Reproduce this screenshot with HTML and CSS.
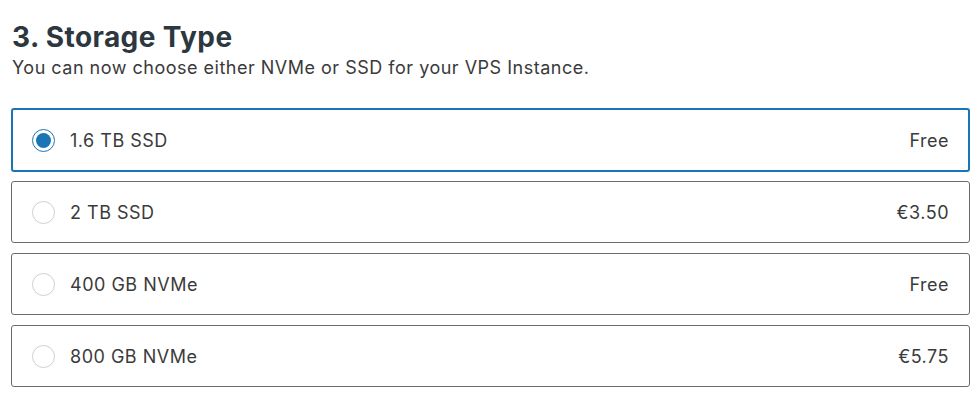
FILE: index.html
```html
<!DOCTYPE html>
<html>
<head>
<meta charset="utf-8">
<link rel="stylesheet" href="styles.css">
</head>
<body>
<section class="storage">
  <h2 class="title">3. Storage Type</h2>
  <p class="subtitle">You can now choose either NVMe or SSD for your VPS Instance.</p>
  <div class="options">
    <label class="option selected">
      <span class="radio"></span>
      <span class="name">1.6 TB SSD</span>
      <span class="price">Free</span>
    </label>
    <label class="option">
      <span class="radio"></span>
      <span class="name">2 TB SSD</span>
      <span class="price">€3.50</span>
    </label>
    <label class="option">
      <span class="radio"></span>
      <span class="name">400 GB NVMe</span>
      <span class="price">Free</span>
    </label>
    <label class="option">
      <span class="radio"></span>
      <span class="name">800 GB NVMe</span>
      <span class="price">€5.75</span>
    </label>
  </div>
</section>
</body>
</html>
```
FILE: styles.css
```css
* { box-sizing: border-box; }
html, body { margin: 0; background: #fff; }
body {
  font-family: Inter, "Open Sans", sans-serif;
  color: #333;
  padding: 18px 9px 0 11px;
}
.title {
  margin: 0 0 0 1px;
  font-size: 28px;
  font-weight: 700;
  line-height: 38px;
  color: #2c3740;
  letter-spacing: 0.4px;
}
.subtitle {
  margin: 0 0 0 1px;
  font-size: 18px;
  line-height: 24px;
  color: #3a3a3a;
  letter-spacing: 0.5px;
}
.options {
  margin-top: 29px;
  display: flex;
  flex-direction: column;
  gap: 10px;
}
.option {
  display: flex;
  align-items: center;
  height: 62px;
  border: 1px solid #6a6a6a;
  border-radius: 3px;
  padding: 0 20px 0 20px;
  font-size: 18px;
  letter-spacing: 0.5px;
  color: #3b3b3b;
}
.option.selected {
  border: 2px solid #1b74b5;
  padding: 0 19px 0 19px;
  margin: -1px 0;
  height: 64px;
}
.radio {
  width: 23px;
  height: 23px;
  border-radius: 50%;
  border: 1px solid #cfcfcf;
  flex: none;
  position: relative;
}
.selected .radio {
  border-color: #1b74b5;
}
.selected .radio::after {
  content: "";
  position: absolute;
  left: 3px;
  top: 3px;
  width: 15px;
  height: 15px;
  border-radius: 50%;
  background: #1b74b5;
}
.name {
  margin-left: 15px;
  flex: 1;
}
.price {
  text-align: right;
}
```
